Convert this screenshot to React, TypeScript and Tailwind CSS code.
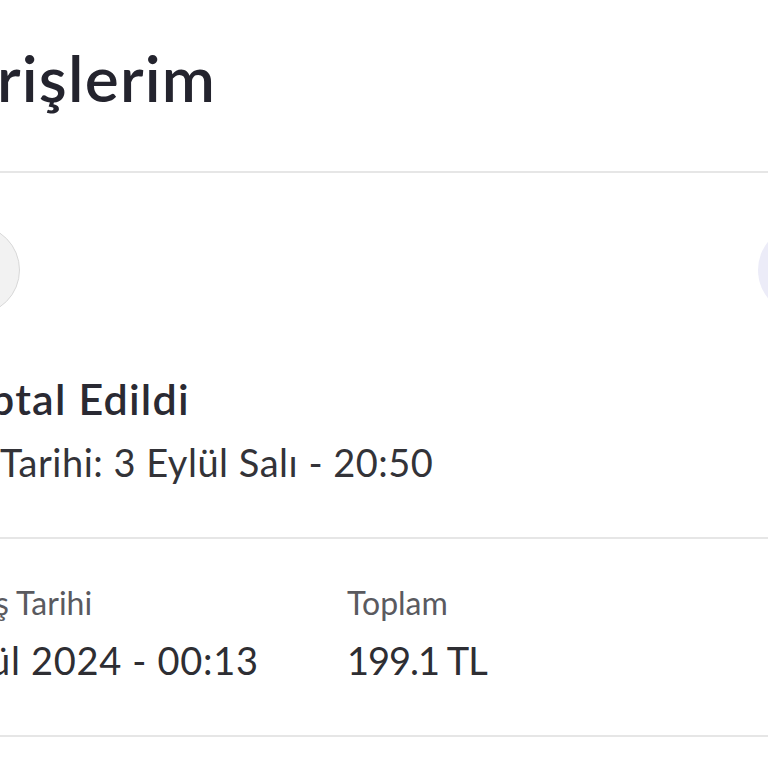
export default function App() {
  return (
    <div
      className="h-[768px] w-[768px] overflow-hidden bg-white"
      style={{ fontFamily: 'Lato, "Open Sans", sans-serif' }}
    >
      <header className="h-[171px] pt-[42px]">
        <h1 className="ml-[-3px] whitespace-nowrap text-[64px] font-semibold leading-[72px] tracking-[1.2px] text-[#24242e]">
          rişlerim
        </h1>
      </header>
      <div className="h-[2px] bg-[#e6e6e6]" />

      <section className="h-[364px] overflow-hidden">
        <div className="mt-[52px] flex items-center justify-between">
          <div className="ml-[-70px] h-[90px] w-[90px] shrink-0 rounded-full border-[1.5px] border-[#d8d8d8] bg-[#f2f2f2]" />
          <div className="mr-[-80px] h-[90px] w-[90px] shrink-0 rounded-full bg-[#ececf8]" />
        </div>
        <p className="ml-[-10px] mt-[60px] whitespace-nowrap text-[43px] font-semibold leading-[48px] tracking-[1.2px] text-[#2a2a33]">
          ptal Edildi
        </p>
        <p className="mt-[16px] whitespace-nowrap text-[38px] leading-[46px] tracking-[0.5px] text-[#333338]">
          Tarihi: 3 Eylül Salı - 20:50
        </p>
      </section>
      <div className="h-[2px] bg-[#e6e6e6]" />

      <section className="flex h-[196px] pt-[44px]">
        <div className="w-[347px] shrink-0">
          <p className="ml-[-5px] whitespace-nowrap text-[32px] leading-[40px] text-[#5a5a5f]">ş Tarihi</p>
          <p className="ml-[-11px] mt-[14px] whitespace-nowrap text-[38px] leading-[46px] tracking-[0.7px] text-[#2e2e33]">
            ül 2024 - 00:13
          </p>
        </div>
        <div>
          <p className="whitespace-nowrap text-[32px] leading-[40px] text-[#5a5a5f]">Toplam</p>
          <p className="mt-[14px] whitespace-nowrap text-[38px] leading-[46px] tracking-[-1px] text-[#2e2e33]">
            199.1 TL
          </p>
        </div>
      </section>
      <div className="h-[2px] bg-[#e6e6e6]" />
    </div>
  )
}
